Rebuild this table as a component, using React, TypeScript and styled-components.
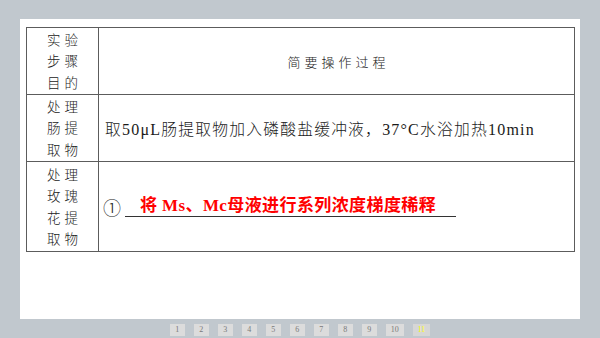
import React from "react";
import styled, { createGlobalStyle } from "styled-components";

const GlobalStyle = createGlobalStyle`
  html, body {
    margin: 0;
    padding: 0;
    background: #c1c8ce;
  }
`;

const Page = styled.div`
  width: 600px;
  height: 338px;
  background: #c1c8ce;
  display: flex;
  flex-direction: column;
  align-items: center;
  overflow: hidden;
`;

const Slide = styled.div`
  margin-top: 19px;
  width: 560px;
  height: 300px;
  box-sizing: border-box;
  background: #ffffff;
  padding: 8px 0 0 6px;
`;

const Table = styled.div`
  width: 549px;
  box-sizing: border-box;
  display: grid;
  grid-template-columns: 71px 1fr;
  grid-template-rows: 66px 66px 89px;
  gap: 1px;
  background: #5c5c5c;
  border: 1px solid #5c5c5c;
`;

const Cell = styled.div<{ $center?: boolean }>`
  background: #ffffff;
  display: flex;
  align-items: center;
  justify-content: ${(p) => (p.$center ? "center" : "flex-start")};
  color: #222;
  font-family: "Liberation Serif", "Noto Sans CJK SC", serif;
`;

const StepLabel = styled.div`
  width: 100%;
  text-align: center;
  font-family: "Noto Sans CJK SC", sans-serif;
  font-weight: 300;
  font-size: 13.5px;
  line-height: 21.5px;
  letter-spacing: 4px;
  padding-left: 4px;
  color: #222;
`;

const HeadText = styled.div`
  font-family: "Noto Sans CJK SC", sans-serif;
  font-weight: 300;
  font-size: 13px;
  letter-spacing: 4px;
  padding-left: 4px;
  color: #222;
`;

const BodyText = styled.div`
  padding-left: 6px;
  font-size: 16px;
  letter-spacing: 1.2px;
  color: #1a1a1a;
  white-space: nowrap;
`;

const Cjk = styled.span`
  font-family: "Noto Sans CJK SC", sans-serif;
  font-weight: 300;
  font-size: 15.8px;
`;

const Answer = styled.div`
  display: flex;
  align-items: center;
  padding-left: 4px;
`;

const Circled = styled.span`
  font-family: "Noto Sans CJK SC", sans-serif;
  font-weight: 300;
  font-size: 18px;
  color: #222;
  margin-right: 4px;
`;

const Blank = styled.span`
  display: inline-block;
  border-bottom: 1px solid #333;
  padding: 0 20px 0 15px;
  line-height: 20px;
  color: #ff0000;
  font-weight: bold;
  font-size: 17px;
  letter-spacing: 0.4px;
  font-family: "Liberation Serif", "Noto Sans CJK SC", serif;
  white-space: nowrap;
`;

const Pager = styled.div`
  margin-top: 5px;
  display: flex;
  gap: 9px;
`;

const PageBtn = styled.div<{ $active?: boolean }>`
  height: 12px;
  min-width: 15px;
  padding: 0 5px;
  box-sizing: border-box;
  background: ${(p) => (p.$active ? "#d6d6d6" : "#dcdcdc")};
  color: ${(p) => (p.$active ? "#ffff00" : "#7a7a7a")};
  font-family: "Liberation Serif", serif;
  font-size: 8px;
  line-height: 12px;
  text-align: center;
`;

const rows = [
  ["实验", "步骤", "目的"],
  ["处理", "肠提", "取物"],
  ["处理", "玫瑰", "花提", "取物"],
];

export default function App() {
  return (
    <>
      <GlobalStyle />
      <Page>
        <Slide>
          <Table>
            <Cell $center>
              <StepLabel>
                {rows[0].map((l) => (
                  <div key={l}>{l}</div>
                ))}
              </StepLabel>
            </Cell>
            <Cell $center>
              <HeadText>简要操作过程</HeadText>
            </Cell>

            <Cell $center>
              <StepLabel>
                {rows[1].map((l) => (
                  <div key={l}>{l}</div>
                ))}
              </StepLabel>
            </Cell>
            <Cell>
              <BodyText>
                <Cjk>取</Cjk>50μL<Cjk>肠提取物加入磷酸盐缓冲液，</Cjk>37°C
                <Cjk>水浴加热</Cjk>10min
              </BodyText>
            </Cell>

            <Cell $center>
              <StepLabel>
                {rows[2].map((l) => (
                  <div key={l}>{l}</div>
                ))}
              </StepLabel>
            </Cell>
            <Cell>
              <Answer>
                <Circled>①</Circled>
                <Blank>将 Ms、Mc母液进行系列浓度梯度稀释</Blank>
              </Answer>
            </Cell>
          </Table>
        </Slide>
        <Pager>
          {Array.from({ length: 11 }, (_, i) => (
            <PageBtn key={i} $active={i === 10}>
              {i + 1}
            </PageBtn>
          ))}
        </Pager>
      </Page>
    </>
  );
}
